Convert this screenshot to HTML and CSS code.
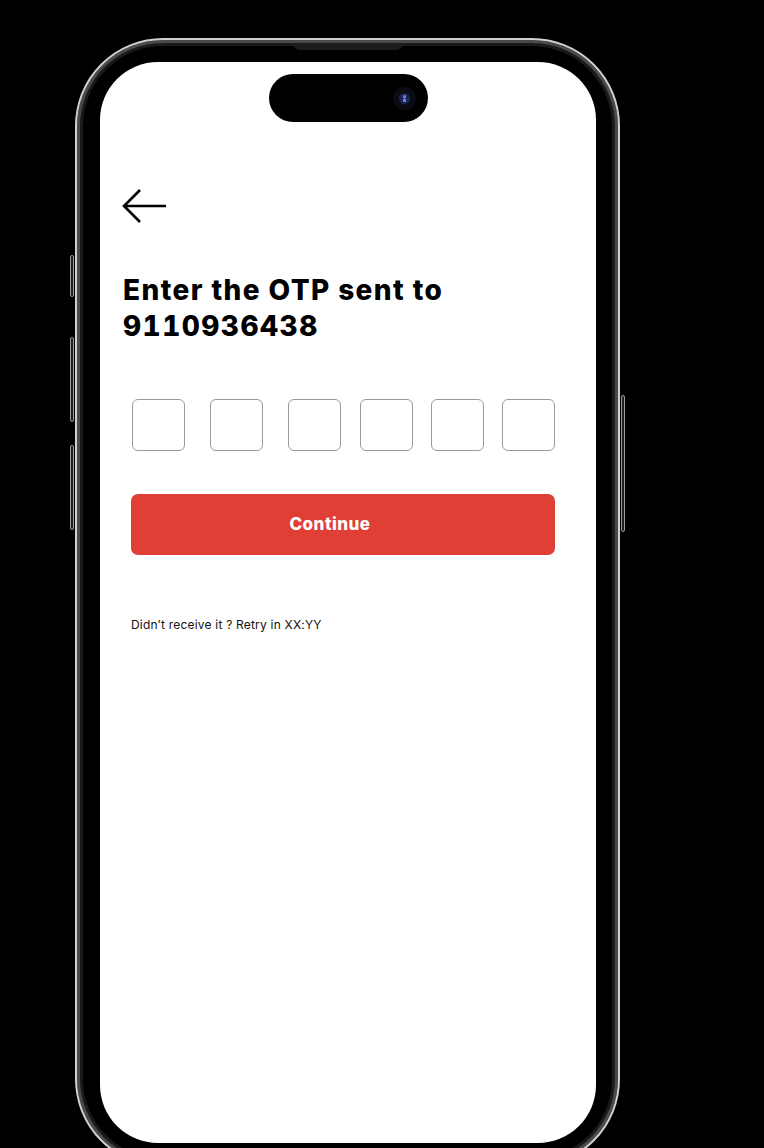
FILE: index.html
```html
<!DOCTYPE html>
<html lang="en">
<head>
<meta charset="utf-8">
<title>Enter OTP</title>
<link rel="stylesheet" href="styles.css">
</head>
<body>
<div class="phone">
  <span class="side-btn action"></span>
  <span class="side-btn vol-up"></span>
  <span class="side-btn vol-down"></span>
  <span class="side-btn power"></span>
  <span class="speaker"></span>
  <div class="screen">
    <div class="island"><span class="camera"><span class="lens"></span></span></div>
    <header class="top">
      <svg class="back" width="46" height="34" viewBox="0 0 46 34" aria-label="Back">
        <path d="M2 17 H44 M18 1 L2 17 L18 33" fill="none" stroke="#000" stroke-width="2.6" stroke-linecap="butt" stroke-linejoin="miter"/>
      </svg>
      <h1 class="title">Enter the OTP sent to<br><span class="phone-no">9110936438</span></h1>
    </header>
    <main class="form">
      <div class="otp">
        <input class="box" maxlength="1">
        <input class="box b2" maxlength="1">
        <input class="box b3" maxlength="1">
        <input class="box b4" maxlength="1">
        <input class="box b5" maxlength="1">
        <input class="box b6" maxlength="1">
      </div>
      <button class="continue">Continue</button>
      <p class="retry">Didn’t receive it ? Retry in XX:YY</p>
    </main>
  </div>
</div>
</body>
</html>
```
FILE: styles.css
```css
html, body {
  margin: 0;
  padding: 0;
}
body {
  background: #000;
  height: 1148px;
  overflow: hidden;
  font-family: Inter, "Noto Sans", "Liberation Sans", sans-serif;
  font-optical-sizing: none;
  font-variation-settings: "opsz" 14;
}
.phone {
  position: relative;
  box-sizing: border-box;
  width: 545px;
  height: 1129px;
  margin: 38px 0 0 75px;
  padding: 22px 22px 22px 23px;
  border: 2px solid #d0d0d0;
  border-radius: 88px;
  background: #000;
  box-shadow: inset 0 0 0 3px #4a4a4a, inset 0 0 0 6px #1a1a1a;
}
.side-btn {
  position: absolute;
  width: 4px;
  background: #1e1e1e;
  border: 1px solid #9c9c9c;
  border-radius: 2px;
  box-sizing: border-box;
}
.action { left: -7px; top: 215px; height: 42px; }
.vol-up { left: -7px; top: 297px; height: 85px; }
.vol-down { left: -7px; top: 405px; height: 85px; }
.power { right: -7px; top: 355px; height: 137px; }
.speaker {
  position: absolute;
  left: 216px;
  top: 3px;
  width: 110px;
  height: 7px;
  background: #1d1d1d;
  border-radius: 0 0 8px 8px;
}
.screen {
  height: 100%;
  background: #fff;
  border-radius: 58px;
  padding-top: 12px;
  box-sizing: border-box;
  overflow: hidden;
}
.island {
  width: 159px;
  height: 48px;
  margin: 0 auto;
  background: #000;
  border-radius: 24px;
  display: flex;
  align-items: center;
  justify-content: flex-end;
  padding-right: 12px;
  box-sizing: border-box;
}
.camera {
  width: 23px;
  height: 23px;
  border-radius: 50%;
  background: #0b0b14;
  display: flex;
  align-items: center;
  justify-content: center;
}
.lens {
  width: 11px;
  height: 11px;
  border-radius: 50%;
  background: radial-gradient(circle at 50% 35%, #6f7fd0 0 1.5px, transparent 2px),
              radial-gradient(circle at 50% 68%, #6f7fd0 0 1.5px, transparent 2px),
              #1b2458;
}
.top {
  padding-left: 22px;
}
.back {
  display: block;
  margin-top: 67px;
}
.title {
  margin: 49px 0 0 1px;
  font-size: 28px;
  line-height: 36px;
  font-weight: 800;
  color: #000;
  letter-spacing: 1.4px;
}
.phone-no {
  font-variant-numeric: tabular-nums;
  letter-spacing: 1.5px;
}
.form {
  padding: 0 43px 0 31px;
}
.otp {
  display: flex;
  margin-top: 55px;
  padding-left: 1px;
}
.box {
  width: 53px;
  height: 52px;
  box-sizing: border-box;
  border: 1px solid #9a9a9a;
  border-radius: 6px;
  background: #fff;
  margin: 0;
  padding: 0;
  outline: none;
}
.b2 { margin-left: 25px; }
.b3 { margin-left: 25px; }
.b4 { margin-left: 19px; }
.b5 { margin-left: 18px; }
.b6 { margin-left: 18px; }
.continue {
  display: block;
  width: 424px;
  height: 61px;
  margin-top: 43px;
  border: none;
  border-radius: 7px;
  background: #e03f35;
  color: #fff;
  font-family: inherit;
  font-variation-settings: inherit;
  font-size: 17px;
  font-weight: 800;
  line-height: 61px;
  letter-spacing: 0.5px;
  padding: 0 26px 0 0;
}
.retry {
  margin: 62px 0 0;
  font-size: 12px;
  line-height: 15px;
  color: #111;
  letter-spacing: 0.2px;
}
```
